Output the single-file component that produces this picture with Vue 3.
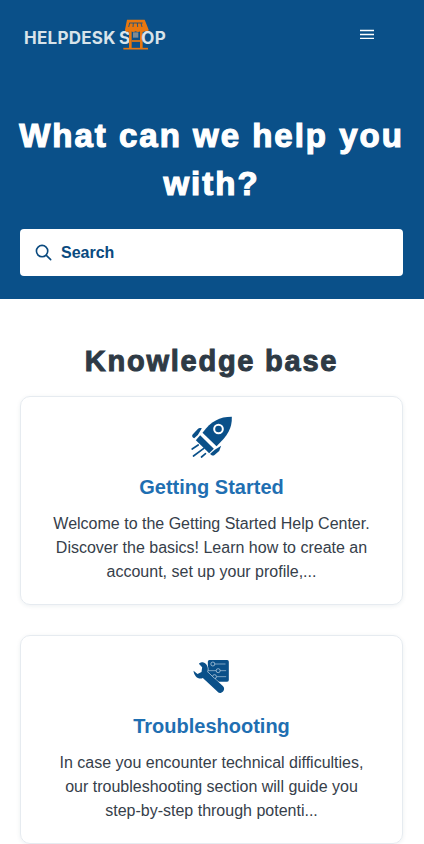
<template>
  <div class="page">
    <section class="hero">
      <header class="topbar">
        <a class="logo" href="#">
          <span class="logo-text">HELPDESK S</span>
          <!-- storefront mark, coords from the logo at 3x -->
          <svg class="logo-icon" viewBox="360 50 90 102" aria-hidden="true">
            <path d="M378 58h53l12 30c0 4-4 6-8 6h-3v-1c-4 3-10 3-14 0-4 3-10 3-14 0-4 3-10 3-14 0v1h-11c-4 0-7-2-7-6z" fill="#e8770f" />
            <path d="M385 68h40M386 68l-3 12M397 68l-1 12M409 68l1 12M420 68l3 12" stroke="#0a5089" stroke-width="2.500" fill="none" />
            <path d="M388 92v53M421 92v53" stroke="#e8770f" stroke-width="8" fill="none" />
            <path d="M392 122h26" stroke="#e8770f" stroke-width="5" fill="none" />
            <path d="M367 145h74" stroke="#e8770f" stroke-width="5" fill="none" />
            <rect x="396" y="96" width="16" height="16" fill="#7f8a92" />
          </svg>
          <span class="logo-text">OP</span>
        </a>
        <button class="menu-btn" aria-label="Menu">
          <svg viewBox="0 0 14 10" width="14" height="10" fill="none" stroke="#fff" stroke-width="1.300">
            <path d="M0 1.500h14M0 5.500h14M0 9.500h14" />
          </svg>
        </button>
      </header>
      <h1>What can we help you with?</h1>
      <div class="search">
        <svg viewBox="0 0 18 18" class="search-icon" fill="none" stroke="currentColor" stroke-width="1.700" stroke-linecap="round">
          <circle cx="7.500" cy="7.500" r="6" />
          <path d="M12 12l4.600 4.600" />
        </svg>
        <span>Search</span>
      </div>
    </section>

    <main class="content">
      <h2>Knowledge base</h2>
      <article v-for="card in cards" :key="card.title" class="card">
        <div class="card-icon">
          <svg v-if="card.icon === 'rocket'" viewBox="7.500 0 240 180" width="80" height="60">
            <g fill="#0a5089">
              <path d="M187 35C188 70 175 90 141 124L99 83C125 48 150 35 187 35Z" />
              <path d="M92 91L133 131L119 145L79 106Z" />
              <path d="M97 70L85 90L74 100C68 98 66 92 70 88L85 72C88 68 92 68 97 70Z" />
              <path d="M155 122L149 138L135 150C130 154 124 150 122 146L136 134Z" />
            </g>
            <circle cx="147" cy="72" r="13" fill="none" stroke="#fff" stroke-width="6" />
            <path d="M68 132L86 120M72 153L103 130M96 156L108 146" stroke="#0a5089" stroke-width="5" stroke-linecap="round" fill="none" />
          </svg>
          <svg v-else viewBox="7.500 -18 240 180" width="80" height="60">
            <rect x="115" y="30" width="63" height="65" rx="5" fill="#0a5089" />
            <path d="M136 42H168M116 62H140M152 62H170M142 80H170" stroke="#b5cde0" stroke-width="2" fill="none" />
            <g fill="none" stroke="#cfe0ec" stroke-width="2">
              <circle cx="130" cy="42" r="6" />
              <circle cx="146" cy="62" r="6" />
              <circle cx="135" cy="80" r="6" />
            </g>
            <path d="M100 37C112 40 118 52 114 66L160 108C168 116 162 126 155 128C150 130 146 128 142 123L100 84C88 90 74 80 72 62L84 72L96 66L98 52L88 41C92 38 96 37 100 37Z" fill="#0a5089" stroke="#fff" stroke-width="3" paint-order="stroke" />
          </svg>
        </div>
        <h3>{{ card.title }}</h3>
        <p>{{ card.text }}</p>
      </article>
    </main>
  </div>
</template>

<script setup>
const cards = [
  {
    icon: 'rocket',
    title: 'Getting Started',
    text: 'Welcome to the Getting Started Help Center. Discover the basics! Learn how to create an account, set up your profile,...',
  },
  {
    icon: 'tools',
    title: 'Troubleshooting',
    text: 'In case you encounter technical difficulties, our troubleshooting section will guide you step-by-step through potenti...',
  },
]
</script>

<style>
html,
body {
  margin: 0;
  background: #fff;
}
</style>

<style scoped>
.page {
  font-family: "Liberation Sans", Arial, sans-serif;
  color: #333;
}

.hero {
  background: #0a5089;
  height: 299px;
  padding: 0 21px 0 20px;
  box-sizing: border-box;
}

.topbar {
  display: flex;
  align-items: center;
  justify-content: space-between;
  height: 68px;
  padding-left: 4px;
}

.logo {
  display: flex;
  align-items: center;
  text-decoration: none;
}

.logo-text {
  font-family: Inter, sans-serif;
  font-weight: 700;
  font-size: 17px;
  letter-spacing: 0.25px;
  word-spacing: -1px;
  padding-top: 8px;
  color: #d8e3ea;
}

.logo-icon {
  width: 30px;
  height: 34px;
  margin: 0 -10px 0 -9px;
}

.menu-btn {
  display: flex;
  padding: 0;
  margin-right: 29px;
  border: 0;
  background: none;
}

h1 {
  margin: 44px -10px 0;
  font-size: 33px;
  line-height: 48px;
  font-weight: 700;
  letter-spacing: 2px;
  -webkit-text-stroke: 1.200px #fff;
  color: #fff;
  text-align: center;
}

.search {
  display: flex;
  align-items: center;
  gap: 9px;
  height: 47px;
  margin-top: 21px;
  padding-left: 15px;
  background: #fff;
  border-radius: 4px;
  color: #0a4a7f;
  font-size: 16px;
  font-weight: 700;
}

.search-icon {
  width: 17px;
  height: 17px;
}

.content {
  padding: 0 21px 0 20px;
}

h2 {
  margin: 0;
  padding-top: 44px;
  font-size: 29px;
  line-height: 36px;
  font-weight: 700;
  letter-spacing: 1.750px;
  -webkit-text-stroke: 1px #2e3a45;
  color: #2e3a45;
  text-align: center;
}

.card {
  margin-top: 17px;
  height: 209px;
  box-sizing: border-box;
  border: 1px solid #e6ebf0;
  border-radius: 10px;
  box-shadow: 0 1px 4px rgba(30, 60, 90, 0.08);
  padding: 8px 30px 0;
  text-align: center;
}

.card + .card {
  margin-top: 30px;
}

.card-icon {
  display: flex;
  justify-content: center;
  height: 60px;
}

h3 {
  margin: 9px 0 0;
  font-size: 20px;
  line-height: 26px;
  font-weight: 700;
  color: #1f6fb2;
}

p {
  margin: 12px 0 0;
  font-size: 16px;
  line-height: 24px;
  color: #36404a;
}
</style>
